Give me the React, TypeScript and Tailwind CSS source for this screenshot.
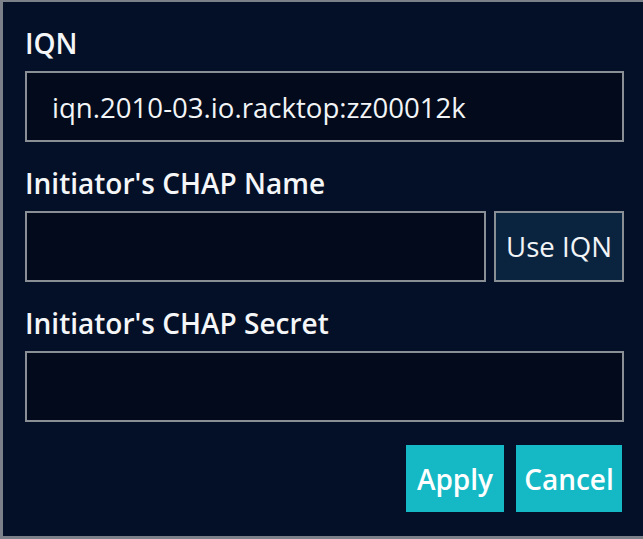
import { useState } from 'react';

const font = { fontFamily: '"Open Sans", "Noto Sans", sans-serif' };

const Field = ({ label, children, first }: { label: string; children: React.ReactNode; first?: boolean }) => (
  <div className={first ? 'flex flex-col' : 'flex flex-col mt-[22px]'}>
    <label className="h-[38px] leading-[38px] text-[28px] font-semibold text-[#f4f6f8] mb-[9px] whitespace-nowrap">
      {label}
    </label>
    {children}
  </div>
);

const inputCls =
  'h-[71px] border-2 border-[#8a8f96] bg-[#020a1b] text-[#f2f4f6] text-[27.6px] px-[25px] outline-none';

const ChapDialog = () => {
  const [iqn, setIqn] = useState('iqn.2010-03.io.racktop:zz00012k');
  const [name, setName] = useState('');
  const [secret, setSecret] = useState('');

  return (
    <div
      className="w-[643px] h-[539px] bg-[#041027] border-t-2 border-l-[3px] border-b-[3px] border-[#7b8089] pt-[22px] pl-[22px] pr-[19px] flex flex-col"
      style={font}
    >
      <Field label="IQN" first>
        <input className={`${inputCls} w-full`} value={iqn} onChange={(e) => setIqn(e.target.value)} />
      </Field>

      <Field label="Initiator's CHAP Name">
        <div className="flex gap-[8px]">
          <input className={`${inputCls} flex-1 min-w-0`} value={name} onChange={(e) => setName(e.target.value)} />
          <button
            onClick={() => setName(iqn)}
            className="h-[71px] w-[130px] border-2 border-[#8a8f96] bg-[#0a2440] text-[#f2f4f6] text-[27.6px] shrink-0"
          >
            Use IQN
          </button>
        </div>
      </Field>

      <Field label="Initiator's CHAP Secret">
        <input
          type="password"
          className={`${inputCls} w-full`}
          value={secret}
          onChange={(e) => setSecret(e.target.value)}
        />
      </Field>

      {/* Actions */}
      <div className="flex justify-end gap-[12px] mt-[23px] pr-[2px]">
        <button className="h-[67px] w-[98px] bg-[#14b9c5] text-white text-[28px] font-semibold">Apply</button>
        <button className="h-[67px] w-[106px] bg-[#14b9c5] text-white text-[28px] font-semibold">Cancel</button>
      </div>
    </div>
  );
};

export default function App() {
  return <ChapDialog />;
}
